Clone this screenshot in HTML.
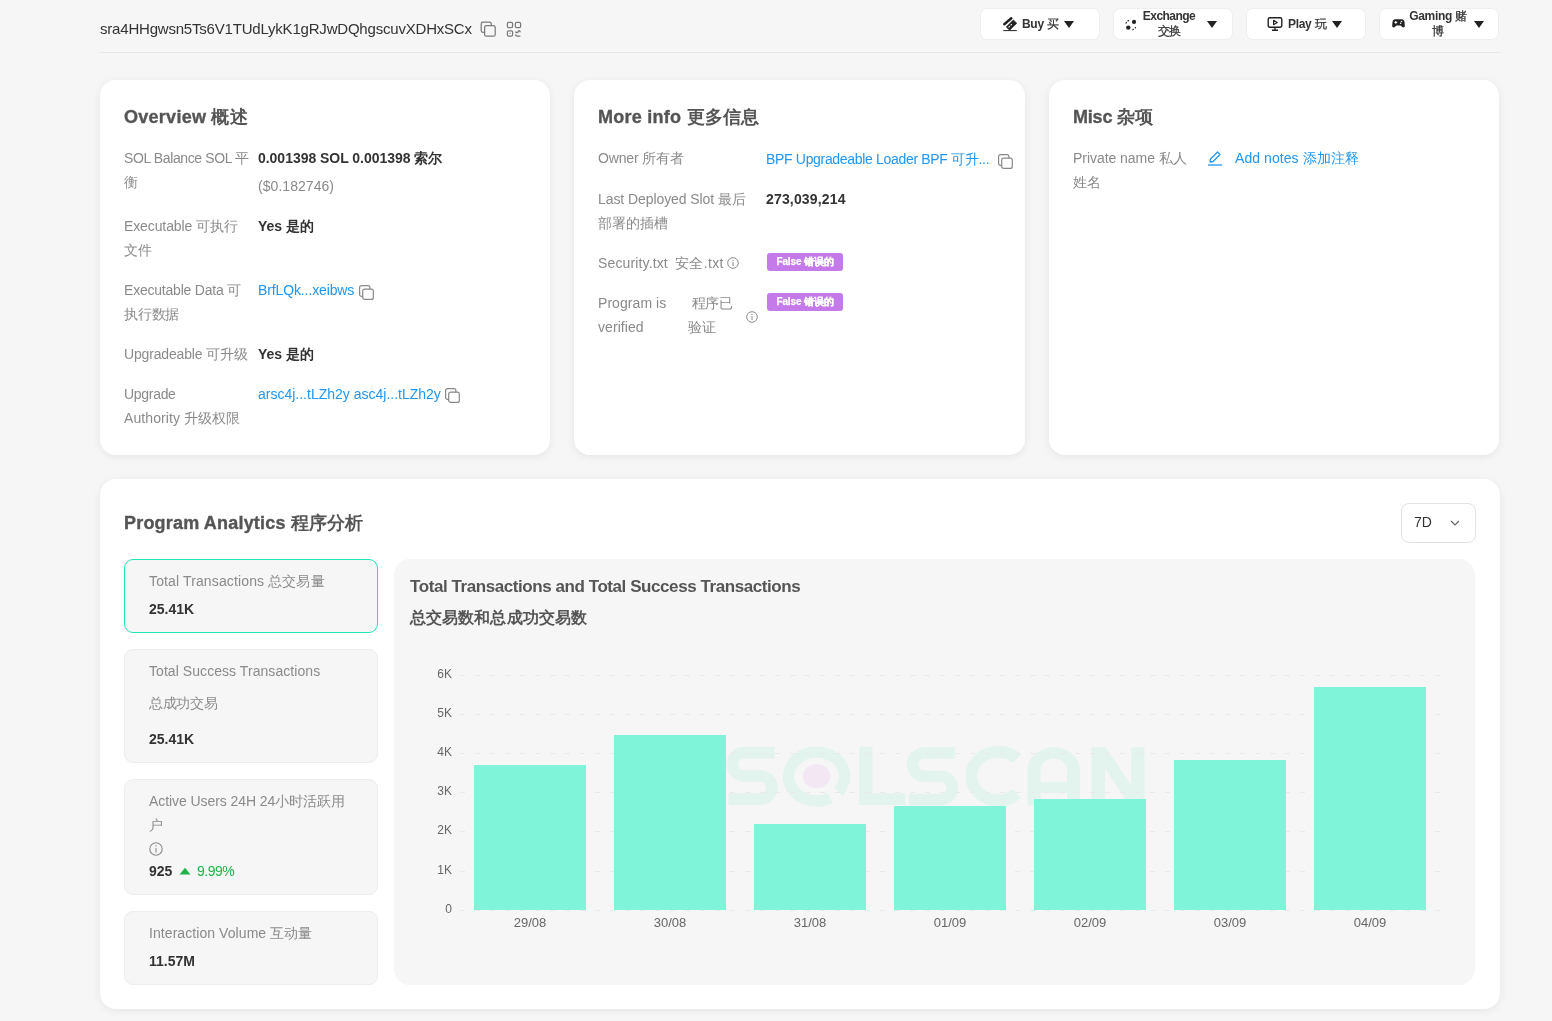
<!DOCTYPE html>
<html><head><meta charset="utf-8">
<style>
*{box-sizing:border-box;margin:0;padding:0}
html,body{width:1552px;height:1021px;overflow:hidden;background:#f6f6f6;font-family:"Liberation Sans",sans-serif;color:#333}
.t{position:absolute;white-space:nowrap;line-height:24px}
.hline{position:absolute;left:100px;top:52px;width:1400px;height:1px;background:#e8e8e8}
.btn{position:absolute;top:8px;height:31.7px;width:119.5px;background:#fff;border-radius:7px;box-shadow:inset 0 0 0 1px #eeeeee;font-size:12px;font-weight:bold;color:#333}
.btn .t{line-height:15px}
.cj{font-weight:normal;-webkit-text-stroke:0.25px currentColor}
.caret{position:absolute;width:0;height:0;border-left:5.5px solid transparent;border-right:5.5px solid transparent;border-top:7px solid #222}
.card{position:absolute;background:#fff;border-radius:16px;box-shadow:0 2px 8px rgba(0,0,0,0.07)}
.ctitle{position:absolute;font-size:18px;font-weight:bold;color:#555;-webkit-text-stroke:0.35px #555;white-space:nowrap;line-height:24px;letter-spacing:0.25px}
.lbl{position:absolute;font-size:14px;color:#8a8a8a;line-height:24px;white-space:nowrap;letter-spacing:-0.3px}
.val{position:absolute;font-size:14px;color:#333;line-height:24px;white-space:nowrap}
.b{font-weight:bold}
.ctitle .cn{-webkit-text-stroke:0}
.link{color:#2196f3}
.badge{position:absolute;width:76px;height:18px;background:#c57ae9;letter-spacing:-0.15px;border-radius:3px;color:#fff;font-size:10px;font-weight:bold;-webkit-text-stroke:0.25px #fff;line-height:18px;text-align:center;white-space:nowrap}
svg{position:absolute;overflow:visible}
.stat{position:absolute;left:124px;width:254px;background:#f6f6f6;border-radius:9px;border:1px solid #ededed}
.ylab{position:absolute;font-size:12px;color:#666;line-height:14px;text-align:right;width:40px;left:412px}
.xlab{position:absolute;font-size:13px;color:#666;line-height:14px;text-align:center;width:80px;top:916px}
.grid{position:absolute;left:460px;width:980px;height:0;border-top:1px dashed #e3e3e3}
.bar{position:absolute;width:112px;background:#80f4d9}
</style></head><body><div id="root" style="position:absolute;left:0;top:0;width:1552px;height:1021px;will-change:transform">
<!-- header -->
<div class="t" style="left:100px;top:17px;font-size:15px;color:#333;letter-spacing:-0.2px">sra4HHgwsn5Ts6V1TUdLykK1gRJwDQhgscuvXDHxSCx</div>
<svg style="left:480px;top:21px" width="16" height="16" viewBox="0 0 16 16" fill="none" stroke="#7a7a7a" stroke-width="1.25"><path d="M4.3 11.3 H3 a1.8 1.8 0 0 1 -1.8 -1.8 V3 a1.8 1.8 0 0 1 1.8 -1.8 H9.5 a1.8 1.8 0 0 1 1.8 1.8 V4.3"/><rect x="4.6" y="4.6" width="10.6" height="10.6" rx="1.8"/></svg>
<svg style="left:506px;top:21px" width="16" height="16" viewBox="0 0 16 16" fill="none" stroke="#7a7a7a" stroke-width="1.25"><rect x="1.4" y="1.4" width="5.2" height="5.2" rx="1.3"/><rect x="9.4" y="1.4" width="5.2" height="5.2" rx="1.3"/><rect x="1.4" y="9.8" width="5.2" height="5.2" rx="1.3"/><path d="M4 4 h0.1 M12 4 h0.1 M3.6 12.4 h0.8" stroke-width="1.2"/><path d="M9.5 10.5 Q10 12 11.3 11.6 Q12.3 11 12.6 9.8 Q13.8 9.5 14.4 11.2 M9.4 13.5 Q9.8 15 11.3 15 H14.4"/></svg>
<div class="hline"></div>

<div class="btn" style="left:980px">
  <svg style="left:22px;top:7.5px" width="16" height="16" viewBox="0 0 16 16"><path d="M2.3 8.3 L9.3 2.3" stroke="#222" stroke-width="2.5" stroke-linecap="round"/><path d="M4.2 11 L11.3 3.9 L14.8 7.2 L7.6 14.2 Z" fill="#222" stroke="#222" stroke-width="0.6" stroke-linejoin="round"/><path d="M6.6 11.3 L10 8" stroke="#fff" stroke-width="1.1" stroke-dasharray="1.6 1.2"/><path d="M1.3 14.6 H14.8" stroke="#222" stroke-width="1"/></svg>
  <div class="t" style="left:42px;top:8.5px;letter-spacing:-0.3px">Buy <span class="cj">买</span></div>
  <div class="caret" style="left:84px;top:12.5px"></div>
</div>
<div class="btn" style="left:1113px">
  <svg style="left:12px;top:10.5px" width="12" height="12" viewBox="0 0 12 12"><circle cx="9" cy="2.9" r="2.1" fill="#222"/><circle cx="3.3" cy="8.6" r="2.2" fill="#222"/><path d="M0.9 4.6 Q1.8 2.2 4.4 1.1" fill="none" stroke="#222" stroke-width="1.1" stroke-dasharray="1.6 1.3"/><path d="M7.4 10.9 Q10 10 11.1 7.3" fill="none" stroke="#222" stroke-width="1.1" stroke-dasharray="1.6 1.3"/></svg>
  <div class="t" style="left:28px;top:0.5px;width:56px;text-align:center;line-height:15.5px;letter-spacing:-0.55px">Exchange<br><span class="cj">交换</span></div>
  <div class="caret" style="left:94px;top:12.5px"></div>
</div>
<div class="btn" style="left:1246px">
  <svg style="left:21px;top:7.5px" width="16" height="16" viewBox="0 0 16 16"><rect x="1.2" y="1.8" width="13.6" height="9.4" rx="1.6" fill="none" stroke="#222" stroke-width="1.4"/><path d="M6.6 4.3 L10.2 6.5 L6.6 8.7 Z" fill="none" stroke="#222" stroke-width="1.2" stroke-linejoin="round"/><path d="M8 11.2 V14 M5 14.3 H11" stroke="#222" stroke-width="1.4"/></svg>
  <div class="t" style="left:42px;top:8.5px;letter-spacing:-0.3px">Play <span class="cj">玩</span></div>
  <div class="caret" style="left:86px;top:12.5px"></div>
</div>
<div class="btn" style="left:1379px">
  <svg style="left:13px;top:10.5px" width="13" height="9" viewBox="0 0 13 9"><path d="M3.3 0.3 H9.7 C11.3 0.3 12.3 1.4 12.5 3 L12.8 6.8 C12.9 8.3 11.4 9 10.3 8 L8.6 6.4 H4.4 L2.7 8 C1.6 9 0.1 8.3 0.2 6.8 L0.5 3 C0.7 1.4 1.7 0.3 3.3 0.3 Z" fill="#222"/><path d="M2.4 3.4 H5.2 M3.8 2 V4.8" stroke="#fff" stroke-width="1"/><circle cx="9.5" cy="2.4" r="0.75" fill="#fff"/><circle cx="8.6" cy="4.3" r="0.75" fill="#fff"/></svg>
  <div class="t" style="left:28px;top:0.5px;width:62px;text-align:center;line-height:15.5px;letter-spacing:-0.3px">Gaming <span class="cj">赌</span><br><span class="cj">博</span></div>
  <div class="caret" style="left:95px;top:12.5px"></div>
</div>

<!-- Overview -->
<div class="card" style="left:100px;top:80px;width:450px;height:375px"></div>
<div class="ctitle" style="left:124px;top:105px;letter-spacing:0.27px">Overview <span class="cn">概述</span></div>
<div class="lbl" style="left:124px;top:146px;letter-spacing:-0.39px">SOL Balance SOL 平<br>衡</div>
<div class="val b" style="left:258px;top:146px;letter-spacing:-0.03px">0.001398 SOL 0.001398 索尔</div>
<div class="val" style="left:258px;top:174px;color:#8a8a8a;letter-spacing:0.05px">($0.182746)</div>
<div class="lbl" style="left:124px;top:214px;letter-spacing:-0.11px">Executable 可执行<br>文件</div>
<div class="val b" style="left:258px;top:214px">Yes 是的</div>
<div class="lbl" style="left:124px;top:278px;letter-spacing:-0.21px">Executable Data 可<br>执行数据</div>
<div class="val link" style="left:258px;top:278px;letter-spacing:-0.12px">BrfLQk...xeibws</div>
<svg style="left:359px;top:284.5px" width="15" height="15" viewBox="0 0 15 15" fill="none" stroke="#888" stroke-width="1.2"><path d="M3.7 11.4 H2.6 a2 2 0 0 1 -2 -2 V2.6 a2 2 0 0 1 2 -2 H8.9 a2 2 0 0 1 2 2 V4.2"/><rect x="3.7" y="4.2" width="10.6" height="10.2" rx="2"/></svg>
<div class="lbl" style="left:124px;top:342px;letter-spacing:-0.17px">Upgradeable 可升级</div>
<div class="val b" style="left:258px;top:342px">Yes 是的</div>
<div class="lbl" style="left:124px;top:382px">Upgrade<br><span style="letter-spacing:0.1px">Authority 升级权限</span></div>
<div class="val link" style="left:258px;top:382px">arsc4j...tLZh2y asc4j...tLZh2y</div>
<svg style="left:445px;top:388.3px" width="15" height="15" viewBox="0 0 15 15" fill="none" stroke="#888" stroke-width="1.2"><path d="M3.7 11.4 H2.6 a2 2 0 0 1 -2 -2 V2.6 a2 2 0 0 1 2 -2 H8.9 a2 2 0 0 1 2 2 V4.2"/><rect x="3.7" y="4.2" width="10.6" height="10.2" rx="2"/></svg>

<!-- More info -->
<div class="card" style="left:574px;top:80px;width:451px;height:375px"></div>
<div class="ctitle" style="left:598px;top:105px;letter-spacing:0.25px">More info <span class="cn">更多信息</span></div>
<div class="lbl" style="left:598px;top:146px;letter-spacing:-0.17px">Owner 所有者</div>
<div class="val link" style="left:766px;top:147px;letter-spacing:-0.32px">BPF Upgradeable Loader BPF 可升...</div>
<svg style="left:998px;top:154px" width="15" height="15" viewBox="0 0 15 15" fill="none" stroke="#888" stroke-width="1.2"><path d="M3.7 11.4 H2.6 a2 2 0 0 1 -2 -2 V2.6 a2 2 0 0 1 2 -2 H8.9 a2 2 0 0 1 2 2 V4.2"/><rect x="3.7" y="4.2" width="10.6" height="10.2" rx="2"/></svg>
<div class="lbl" style="left:598px;top:187px;letter-spacing:-0.08px">Last Deployed Slot 最后<br>部署的插槽</div>
<div class="val b" style="left:766px;top:187px;letter-spacing:0.16px">273,039,214</div>
<div class="lbl" style="left:598px;top:251px;letter-spacing:0.14px">Security.txt</div>
<div class="lbl" style="left:675px;top:251px;letter-spacing:0.36px">安全.txt</div>
<svg style="left:727px;top:257px" width="12" height="12" viewBox="0 0 12 12"><circle cx="6" cy="6" r="5.3" fill="none" stroke="#8a8a8a" stroke-width="1"/><path d="M6 5 V9" stroke="#8a8a8a" stroke-width="1"/><circle cx="6" cy="3.4" r="0.6" fill="#8a8a8a"/></svg>
<div class="badge" style="left:767px;top:253px">False 错误的</div>
<div class="lbl" style="left:598px;top:291px;letter-spacing:0.06px">Program is<br>verified</div>
<div class="lbl" style="left:688px;top:291px">&nbsp;程序已<br>验证</div>
<svg style="left:746px;top:310.5px" width="12" height="12" viewBox="0 0 12 12"><circle cx="6" cy="6" r="5.3" fill="none" stroke="#8a8a8a" stroke-width="1"/><path d="M6 5 V9" stroke="#8a8a8a" stroke-width="1"/><circle cx="6" cy="3.4" r="0.6" fill="#8a8a8a"/></svg>
<div class="badge" style="left:767px;top:293px">False 错误的</div>

<!-- Misc -->
<div class="card" style="left:1049px;top:80px;width:450px;height:375px"></div>
<div class="ctitle" style="left:1073px;top:105px;letter-spacing:-0.21px">Misc <span class="cn">杂项</span></div>
<div class="lbl" style="left:1073px;top:146px;letter-spacing:-0.05px">Private name 私人<br>姓名</div>
<svg style="left:1207px;top:150px" width="16" height="16" viewBox="0 0 16 16"><path d="M3 12 L3.5 9 L10.5 2 L13 4.5 L6 11.5 Z" fill="none" stroke="#2196f3" stroke-width="1.3" stroke-linejoin="round"/><path d="M1 15 H15" stroke="#2196f3" stroke-width="1.3"/></svg>
<div class="val link" style="left:1235px;top:146px;letter-spacing:0.06px">Add notes 添加注释</div>

<!-- Program analytics -->
<div class="card" style="left:100px;top:479px;width:1400px;height:530px"></div>
<div class="ctitle" style="left:124px;top:511px;letter-spacing:0.19px">Program Analytics <span class="cn">程序分析</span></div>
<div style="position:absolute;left:1401px;top:503px;width:75px;height:40px;border:1px solid #e3e3e3;border-radius:8px;background:#fff"></div>
<div class="t" style="left:1414px;top:510px;font-size:14px;color:#333">7D</div>
<svg style="left:1450px;top:519.5px" width="10" height="6" viewBox="0 0 10 6"><path d="M1 1 L5 5 L9 1" fill="none" stroke="#666" stroke-width="1.2"/></svg>

<div class="stat" style="top:559px;height:74px;border:1px solid #1ee6b6"></div>
<div class="lbl" style="left:149px;top:569px;letter-spacing:0.13px">Total Transactions 总交易量</div>
<div class="val b" style="left:149px;top:597px">25.41K</div>

<div class="stat" style="top:649px;height:114px"></div>
<div class="lbl" style="left:149px;top:659px;letter-spacing:0.06px">Total Success Transactions</div>
<div class="lbl" style="left:149px;top:691px">总成功交易</div>
<div class="val b" style="left:149px;top:727px">25.41K</div>

<div class="stat" style="top:779px;height:116px"></div>
<div class="lbl" style="left:149px;top:789px;letter-spacing:-0.07px">Active Users 24H 24小时活跃用<br>户</div>
<svg style="left:149px;top:842px" width="14" height="14" viewBox="0 0 14 14"><circle cx="7" cy="7" r="6.2" fill="none" stroke="#8a8a8a" stroke-width="1.1"/><path d="M7 6 V10.5" stroke="#8a8a8a" stroke-width="1.1"/><circle cx="7" cy="4" r="0.7" fill="#8a8a8a"/></svg>
<div class="val b" style="left:149px;top:859px">925</div>
<svg style="left:179px;top:867px" width="12" height="8" viewBox="0 0 12 8"><path d="M0.5 7.5 L6 0.8 L11.5 7.5 Z" fill="#21b34a"/></svg>
<div class="val" style="left:197px;top:859px;color:#21b34a;letter-spacing:-0.50px">9.99%</div>

<div class="stat" style="top:911px;height:74px"></div>
<div class="lbl" style="left:149px;top:921px;letter-spacing:0.07px">Interaction Volume 互动量</div>
<div class="val b" style="left:149px;top:949px">11.57M</div>

<!-- chart -->
<div style="position:absolute;left:394px;top:559px;width:1081px;height:426px;background:#f6f6f6;border-radius:16px"></div>
<div class="t" style="left:410px;top:575px;font-size:17px;font-weight:bold;color:#555;letter-spacing:-0.43px">Total Transactions and Total Success Transactions</div>
<div class="t" style="left:410px;top:606px;font-size:16px;font-weight:bold;color:#555;letter-spacing:0.10px">总交易数和总成功交易数</div>

<svg style="left:720px;top:740px" width="430" height="72" viewBox="0 0 430 72">
<g fill="none" stroke="#e3f4ef" stroke-width="11.6">
<path d="M54.6 12.6 H23.85 A11.65 11.65 0 0 0 23.85 35.9 H40.4 A11.6 11.6 0 0 1 40.4 59.1 H8.5"/>
<path transform="translate(180.4 0.4)" d="M54.6 12.6 H23.85 A11.65 11.65 0 0 0 23.85 35.9 H40.4 A11.6 11.6 0 0 1 40.4 59.1 H8.5"/>
<path d="M118.35 51.75 A27.97 24.45 0 1 0 110.2 57.8" stroke-width="11.5"/>
<path d="M297 18.5 A27.05 24.2 0 1 0 297 53.6" stroke-width="12"/>
</g>
<g fill="#e3f4ef">
<path d="M139.2 6.8 H152.4 V53.2 H185.4 V65 H139.2 Z"/>
<path fill-rule="evenodd" d="M307.3 65.2 V30.6 A26.35 23.4 0 0 1 360 30.6 V65.2 H347 V53.2 H320.6 V65.2 Z M320.6 41.9 H347 V30.6 A13.2 12 0 0 0 320.6 30.6 Z"/>
<path d="M371.4 7.2 H385.4 L411.2 45.1 V7.2 H424.5 V64.4 H408.7 L385 28.2 V64.4 H371.4 Z"/>
</g>
<ellipse cx="96.6" cy="36.15" rx="13.7" ry="12.05" fill="#f2e7f3"/>
</svg>
<svg style="left:0;top:0" width="1552" height="1021"><g stroke="#e9e9e9" stroke-width="1" stroke-dasharray="5 10"><line x1="460" y1="675.5" x2="1440" y2="675.5"/><line x1="460" y1="714.5" x2="1440" y2="714.5"/><line x1="460" y1="753.5" x2="1440" y2="753.5"/><line x1="460" y1="792.5" x2="1440" y2="792.5"/><line x1="460" y1="831.5" x2="1440" y2="831.5"/><line x1="460" y1="871.5" x2="1440" y2="871.5"/><line x1="460" y1="910.5" x2="1440" y2="910.5"/></g></svg>
<div class="ylab" style="top:667px">6K</div>
<div class="ylab" style="top:706px">5K</div>
<div class="ylab" style="top:745px">4K</div>
<div class="ylab" style="top:784px">3K</div>
<div class="ylab" style="top:823px">2K</div>
<div class="ylab" style="top:863px">1K</div>
<div class="ylab" style="top:902px">0</div>
<div class="bar" style="left:474px;top:765px;height:145px"></div>
<div class="bar" style="left:614px;top:734.5px;height:175.5px"></div>
<div class="bar" style="left:754px;top:824px;height:86px"></div>
<div class="bar" style="left:894px;top:806px;height:104px"></div>
<div class="bar" style="left:1034px;top:798.5px;height:111.5px"></div>
<div class="bar" style="left:1174px;top:759.6px;height:150.4px"></div>
<div class="bar" style="left:1314px;top:686.5px;height:223.5px"></div>
<div class="xlab" style="left:490px">29/08</div>
<div class="xlab" style="left:630px">30/08</div>
<div class="xlab" style="left:770px">31/08</div>
<div class="xlab" style="left:910px">01/09</div>
<div class="xlab" style="left:1050px">02/09</div>
<div class="xlab" style="left:1190px">03/09</div>
<div class="xlab" style="left:1330px">04/09</div>
</div></body></html>
